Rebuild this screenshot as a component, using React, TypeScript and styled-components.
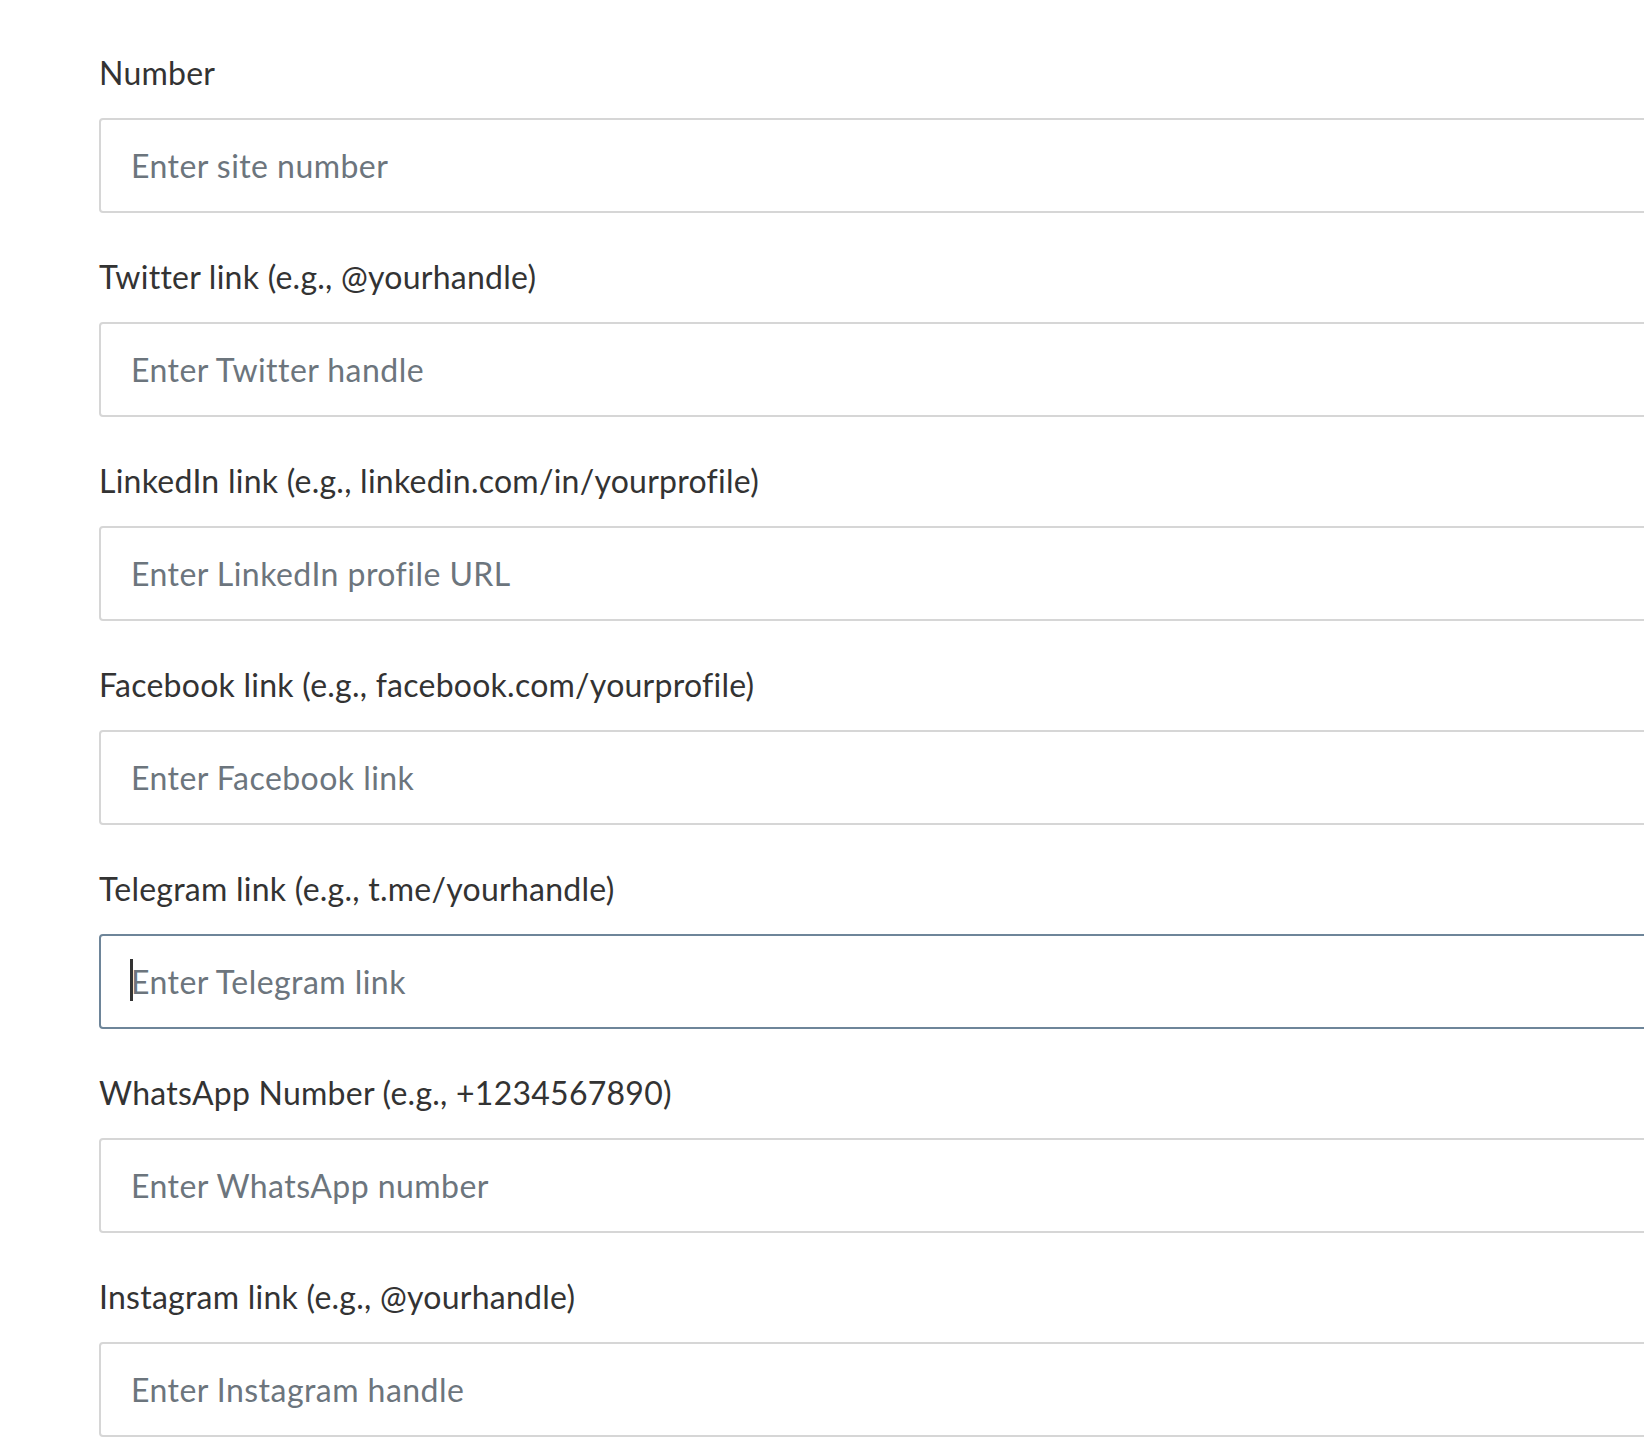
import React from "react";
import styled, { createGlobalStyle } from "styled-components";

const GlobalStyle = createGlobalStyle`
  html, body {
    margin: 0;
    padding: 0;
    background: #ffffff;
    overflow: hidden;
  }
  body {
    font-family: Lato, "Open Sans", "Liberation Sans", sans-serif;
  }
`;

const Page = styled.div`
  overflow: hidden;
  padding: 54px 0 0 99px;
  box-sizing: border-box;
  width: 100%;
`;

const Form = styled.form`
  display: flex;
  flex-direction: column;
  width: calc(100% + 60px);
`;

const Field = styled.div`
  display: flex;
  flex-direction: column;
  margin-bottom: 45px;
`;

const Label = styled.label`
  display: block;
  font-size: 32px;
  line-height: 38px;
  letter-spacing: 0.25px;
  color: #333333;
  margin-bottom: 26px;
`;

const InputWrap = styled.div`
  position: relative;
`;

const Input = styled.input<{ $focused?: boolean }>`
  display: block;
  width: 100%;
  height: 95px;
  box-sizing: border-box;
  padding: 0 30px;
  border: 2px solid ${(p) => (p.$focused ? "#6e8599" : "#d6d6d6")};
  border-radius: 4px;
  background: #ffffff;
  font-family: inherit;
  font-size: 32px;
  letter-spacing: 0.45px;
  color: #333333;
  outline: none;

  &::placeholder {
    color: #6c757d;
    opacity: 1;
  }
`;

const Caret = styled.span`
  position: absolute;
  left: 31px;
  top: 25px;
  width: 3px;
  height: 42px;
  background: #333333;
`;

const fields = [
  { label: "Number", placeholder: "Enter site number" },
  { label: "Twitter link (e.g., @yourhandle)", placeholder: "Enter Twitter handle" },
  {
    label: "LinkedIn link (e.g., linkedin.com/in/yourprofile)",
    placeholder: "Enter LinkedIn profile URL",
  },
  {
    label: "Facebook link (e.g., facebook.com/yourprofile)",
    placeholder: "Enter Facebook link",
  },
  {
    label: "Telegram link (e.g., t.me/yourhandle)",
    placeholder: "Enter Telegram link",
    focused: true,
  },
  {
    label: "WhatsApp Number (e.g., +1234567890)",
    placeholder: "Enter WhatsApp number",
  },
  { label: "Instagram link (e.g., @yourhandle)", placeholder: "Enter Instagram handle" },
];

export default function App() {
  return (
    <>
      <GlobalStyle />
      <Page>
        <Form onSubmit={(e) => e.preventDefault()}>
          {fields.map((f, i) => (
            <Field key={i}>
              <Label htmlFor={`f${i}`}>{f.label}</Label>
              <InputWrap>
                <Input id={`f${i}`} type="text" placeholder={f.placeholder} $focused={f.focused} />
                {f.focused && <Caret />}
              </InputWrap>
            </Field>
          ))}
        </Form>
      </Page>
    </>
  );
}
